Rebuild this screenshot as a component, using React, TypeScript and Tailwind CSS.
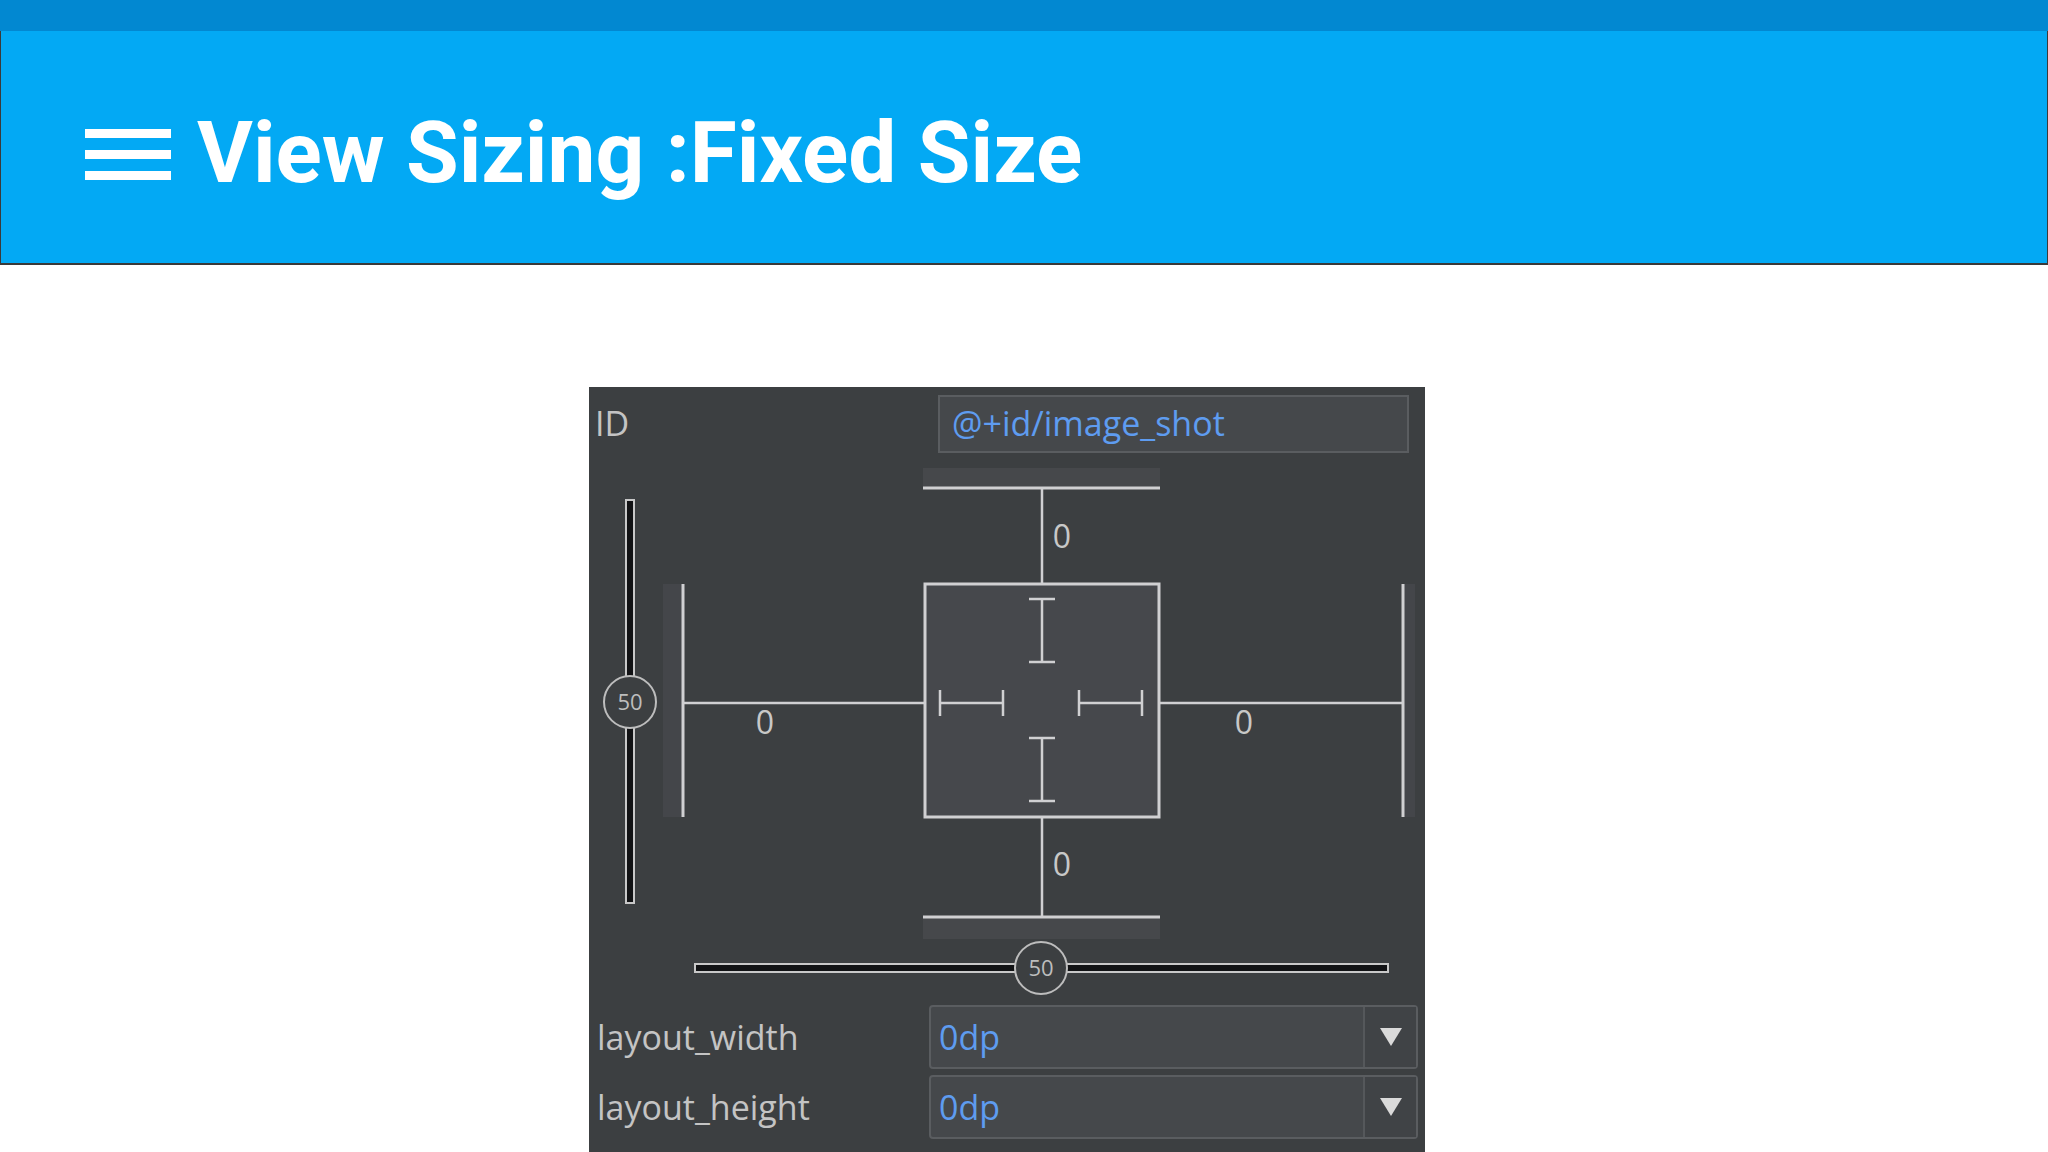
import React from 'react'

const LINE = '#d0d0d2'

function Slider({ vertical }: { vertical: boolean }) {
  // track + knob with the value in it
  if (vertical) {
    return (
      <g>
        <rect x={37} y={40} width={8} height={403} fill="#111214" stroke="#c8c8c8" strokeWidth={2} />
        <circle cx={41} cy={242} r={26} fill="#3c3f41" stroke="#bdbdbd" strokeWidth={2} />
        <text x={41} y={250} textAnchor="middle" fontSize={22} fill="#bdbdbd" fontFamily="'Open Sans', sans-serif">50</text>
      </g>
    )
  }
  return (
    <g>
      <rect x={106} y={504} width={693} height={8} fill="#111214" stroke="#c8c8c8" strokeWidth={2} />
      <circle cx={452} cy={508} r={26} fill="#3c3f41" stroke="#bdbdbd" strokeWidth={2} />
      <text x={452} y={516} textAnchor="middle" fontSize={22} fill="#bdbdbd" fontFamily="'Open Sans', sans-serif">50</text>
    </g>
  )
}

function ConstraintWidget() {
  const zero = (x: number, y: number) => (
    <text x={x} y={y + 11} textAnchor="middle" fontSize={32} fill="#c8c8c8" fontFamily="'Open Sans', sans-serif">0</text>
  )
  return (
    <svg width={836} height={540} viewBox="0 0 836 540" className="block">
      {/* shadows behind the bars */}
      <rect x={334} y={8} width={237} height={20} fill="#46484b" />
      <rect x={334} y={457} width={237} height={22} fill="#46484b" />
      <rect x={74} y={124} width={20} height={233} fill="#44464a" />
      <rect x={814} y={124} width={12} height={233} fill="#44464a" />

      {/* outer bars */}
      <g stroke={LINE} strokeWidth={3}>
        <line x1={334} y1={28} x2={571} y2={28} />
        <line x1={334} y1={457} x2={571} y2={457} />
        <line x1={94} y1={124} x2={94} y2={357} />
        <line x1={814} y1={124} x2={814} y2={357} />
      </g>

      {/* connecting lines */}
      <g stroke={LINE} strokeWidth={2.5}>
        <line x1={453} y1={28} x2={453} y2={124} />
        <line x1={453} y1={357} x2={453} y2={457} />
        <line x1={94} y1={243} x2={336} y2={243} />
        <line x1={570} y1={243} x2={814} y2={243} />
      </g>

      {/* view box */}
      <rect x={336} y={124} width={234} height={233} fill="#46484c" stroke={LINE} strokeWidth={3} />

      {/* fixed size markers */}
      <g stroke={LINE} strokeWidth={2.5}>
        <line x1={453} y1={139} x2={453} y2={202} />
        <line x1={440} y1={139} x2={466} y2={139} />
        <line x1={440} y1={202} x2={466} y2={202} />

        <line x1={453} y1={278} x2={453} y2={341} />
        <line x1={440} y1={278} x2={466} y2={278} />
        <line x1={440} y1={341} x2={466} y2={341} />

        <line x1={351} y1={243} x2={414} y2={243} />
        <line x1={351} y1={230} x2={351} y2={256} />
        <line x1={414} y1={230} x2={414} y2={256} />

        <line x1={490} y1={243} x2={553} y2={243} />
        <line x1={490} y1={230} x2={490} y2={256} />
        <line x1={553} y1={230} x2={553} y2={256} />
      </g>

      {zero(473, 77)}
      {zero(176, 263)}
      {zero(655, 263)}
      {zero(473, 405)}

      <Slider vertical />
      <Slider vertical={false} />
    </svg>
  )
}

function Dropdown({ label, value }: { label: string; value: string }) {
  return (
    <div className="flex items-center h-[64px]">
      <span className="w-[340px] pl-[8px] text-[34px] font-medium text-[#c4c4c4]">{label}</span>
      <div className="w-[489px] h-full flex border-2 border-[#5a5d60] rounded-[4px] bg-[#45484b]">
        <span className="flex-1 flex items-center pl-[8px] text-[34px] font-medium text-[#5e9cf0]">{value}</span>
        <div className="w-[53px] flex items-center justify-center border-l-2 border-[#55585b] bg-[#404346]">
          <svg width={22} height={18} viewBox="0 0 22 18">
            <polygon points="0,0 22,0 11,18" fill="#dadada" />
          </svg>
        </div>
      </div>
    </div>
  )
}

export default function App() {
  return (
    <div className="h-[1152px] bg-white overflow-hidden">
      <div className="h-[31px] bg-[#0288d1]" />
      <header className="h-[234px] bg-[#03a9f4] border-x border-b-2 border-[#3a3a3a] flex items-center pl-[84px] pt-[14px]">
        <div className="w-[86px] flex flex-col gap-[12px]">
          <div className="h-[9px] bg-white" />
          <div className="h-[9px] bg-white" />
          <div className="h-[9px] bg-white" />
        </div>
        <h1 className="ml-[26px] text-[85.6px] font-bold text-white leading-none font-['Roboto',sans-serif]">
          View Sizing :Fixed Size
        </h1>
      </header>

      <div className="pt-[122px] pl-[589px]">
        <div className="w-[836px] h-[765px] bg-[#3c3f41] overflow-hidden font-['Open_Sans',sans-serif]">
          {/* ID row */}
          <div className="flex items-center h-[73px]">
            <span className="w-[349px] pl-[6px] text-[34px] font-medium text-[#c4c4c4]">ID</span>
            <div className="w-[471px] h-[58px] flex items-center pl-[12px] border-2 border-[#5a5d60] bg-[#45484b] text-[34px] font-medium text-[#5e9cf0]">
              @+id/image_shot
            </div>
          </div>

          <ConstraintWidget />

          <div className="flex flex-col gap-[6px] mt-[5px]">
            <Dropdown label="layout_width" value="0dp" />
            <Dropdown label="layout_height" value="0dp" />
          </div>
        </div>
      </div>
    </div>
  )
}
